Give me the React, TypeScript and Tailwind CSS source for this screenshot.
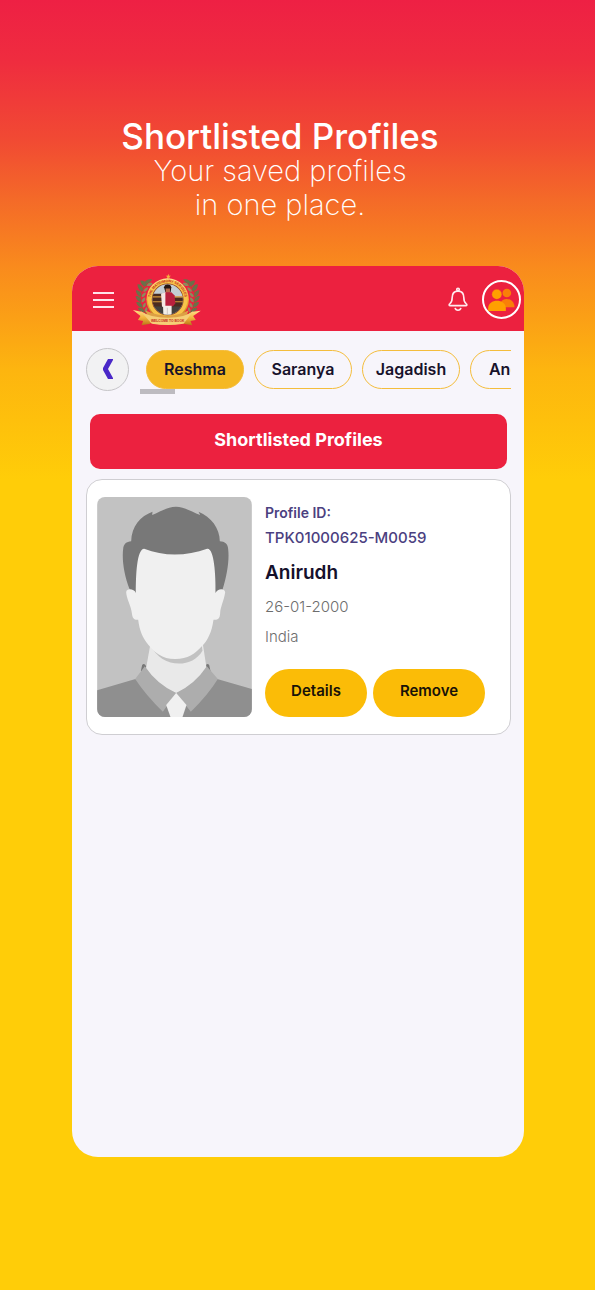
import React, { useState } from "react";

interface Profile {
  id: string;
  name: string;
  dob: string;
  country: string;
}

const tabs = ["Reshma", "Saranya", "Jagadish", "Andrew"];

const shortlisted: Profile[] = [
  {
    id: "TPK01000625-M0059",
    name: "Anirudh",
    dob: "26-01-2000",
    country: "India",
  },
];

// One side of the wreath, mirrored for the other side
const Laurel: React.FC = () => (
  <g>
    <path d="M236 58c-36 22-44 66-14 100" fill="none" stroke="#8a6a2c" strokeWidth="3" />
    <g fill="#6b7048">
      <path d="M240 54c-14-2-22 4-24 12 12 2 20-2 24-12z" />
      <path d="M224 70c-4-10-12-14-20-12 2 12 8 18 18 18z" />
      <path d="M214 84c-4-10-10-16-18-15 0 12 6 20 15 21z" />
      <path d="M208 100c-4-10-10-14-17-13 1 11 7 19 16 19z" />
      <path d="M207 116c-4-9-10-13-17-11 2 10 8 17 17 17z" />
      <path d="M210 132c-5-8-12-11-18-8 3 10 10 15 19 14z" />
      <path d="M216 148c-6-8-13-10-19-7 4 9 12 14 20 12z" />
    </g>
    <g fill="#8d8b5c">
      <path d="M224 74c10 2 16-2 17-9-9-2-15 1-17 9z" />
      <path d="M214 92c9 0 14-6 14-14-9 1-14 6-14 14z" />
      <path d="M209 108c8-1 13-7 12-15-8 2-13 7-12 15z" />
      <path d="M209 124c8-2 12-8 10-16-8 3-12 8-10 16z" />
      <path d="M213 140c7-3 10-9 7-16-7 4-10 9-7 16z" />
      <path d="M220 154c6-4 8-10 4-16-6 4-8 10-4 16z" />
    </g>
  </g>
);

const Logo: React.FC = () => (
  <svg viewBox="180 35 210 160" className="h-[53px] w-[70px]" aria-label="Matrimony Services">
    <defs>
      <linearGradient id="gold" x1="0" y1="0" x2="0" y2="1">
        <stop offset="0" stopColor="#ffe08a" />
        <stop offset="0.5" stopColor="#f2b43c" />
        <stop offset="1" stopColor="#b87318" />
      </linearGradient>
      <clipPath id="scene">
        <circle cx="287" cy="115" r="46" />
      </clipPath>
      <path id="topArc" d="M238 132a52 52 0 1 1 98 0" />
    </defs>
    <path d="M289 37l2 6h6l-5 4 2 6-5-4-5 4 2-6-5-4h6z" fill="#f4b63d" />
    <Laurel />
    <g transform="matrix(-1 0 0 1 574 0)">
      <Laurel />
    </g>
    <circle cx="287" cy="115" r="64" fill="url(#gold)" />
    <circle cx="287" cy="115" r="60" fill="#f7c44b" />
    <circle cx="287" cy="115" r="48" fill="#8f3b18" />
    <g clipPath="url(#scene)">
      <rect x="240" y="68" width="94" height="94" fill="#c3ced3" />
      <path d="M240 98h30l8 10h56v30h-94z" fill="#4b2b20" />
      <path d="M240 105h94v4h-94zM240 120h94v3h-94z" fill="#d49639" />
      <rect x="240" y="136" width="94" height="30" fill="#44403c" />
      <path d="M276 78c2-12 20-12 22 0l-2 14h-16z" fill="#261713" />
      <path d="M281 82h13v16h-13z" fill="#b76c49" />
      <path d="M268 100l14-7h16l10 10 2 24-7 8h-30z" fill="#b9203c" />
      <path d="M267 98l13-4v43h-10z" fill="#f5e8e3" />
      <path d="M273 134h26v31h-25z" fill="#f3eee8" />
      <path d="M286 140v24" stroke="#bcb1ab" strokeWidth="2" />
    </g>
    <text fontFamily="Liberation Sans" fontSize="11" fontWeight="700" fill="#c42a1c">
      <textPath href="#topArc" startOffset="50%" textAnchor="middle">
        THE MATRIMONY SERVICES
      </textPath>
    </text>
    <path d="M182 147l25 5 35 18-8 18-26 5 5-13-16-3 8-12z" fill="url(#gold)" />
    <path d="M387 149l-25 3-35 18 8 18 26 5-5-13 16-3-8-12z" fill="url(#gold)" />
    <path d="M220 148q67 30 130 0l-15 37q-48 12-100 0z" fill="#dca045" />
    <path d="M205 150q28 20 82 20t78-20l-30 38q-48 8-96 0z" fill="#f5cf76" />
    <text x="287" y="183" textAnchor="middle" fontFamily="Liberation Sans" fontSize="10" fontWeight="700" fill="#c42a1c">
      WELCOME TO BOOK
    </text>
  </svg>
);

const BellIcon: React.FC = () => (
  <svg viewBox="84 82 62 76" className="h-[25px] w-5" fill="none" stroke="#ffe9ee" strokeWidth="5">
    <circle cx="115" cy="89" r="4" />
    <path
      d="M115 94c-13 0-18 9-18 20 0 12-2 15-7 19-4 3-3 6 1 6h48c4 0 5-3 1-6-5-4-7-7-7-19 0-11-5-20-18-20z"
      strokeLinejoin="round"
    />
    <path d="M106 146c2 10 16 10 18 0" />
  </svg>
);

const PeopleIcon: React.FC = () => (
  <svg viewBox="206 82 80 72" className="h-6 w-[27px]">
    <circle cx="262" cy="97" r="13" fill="#f97f08" />
    <path d="M244 140v-14c5-18 41-15 41 14z" fill="#f97f08" />
    <circle cx="232" cy="101" r="15" fill="#ffa000" stroke="#ec213f" strokeWidth="1" />
    <path d="M206 151v-8c0-30 53-30 53 0v8z" fill="#ffa000" />
  </svg>
);

const Avatar: React.FC = () => (
  <svg viewBox="52 52 464 660" className="h-[220px] w-[155px] shrink-0 rounded-lg" aria-label="Profile photo">
    <rect x="52" y="52" width="464" height="660" fill="#c2c2c2" />
    <path d="M52 632l115-34 80 60h85l80-60 104 30v84H52z" fill="#8f8f8f" />
    <path d="M187 556q6-8 12 4v14h-16zM388 556q-6-8-12 4v14h16z" fill="#777" />
    <path d="M214 480l-16 90q34 50 91 70 60-20 92-70l-14-90z" fill="#e9e9e9" />
    <path d="M212 495c30 70 124 74 156 18l-5-38-148-2z" fill="#c2c2c2" />
    <path d="M195 560q36 54 94 80l-40 56q-50-48-83-98zM381 560q-36 54-92 80l44 56q50-48 81-98z" fill="#adadad" />
    <path d="M289 640l31 36-12 36h-36l-13-36z" fill="#f0f0f0" />
    <path
      d="M150 330c-18-44-24-92-20-122 1-15 10-22 24-23 1-46 28-76 64-89l-1 10c20-7 45-25 71-25 27 0 51 18 73 25l-5-10c38 15 64 50 64 89 15 1 24 7 25 23 4 32-3 78-17 122l-22 12H168z"
      fill="#787878"
    />
    <path
      d="M168 340c0-55 3-132 25-133 60 24 128 22 189 0 21-3 26 78 25 133 5-14 28-16 29-2-4 27-14 43-15 62-1 19-8 21-20 20-5 36-17 62-35 80-22 23-41 38-80 38-40 0-61-19-80-42-18-22-27-44-31-76-12 1-17-3-19-20-2-20-16-42-17-62 1-14 25-10 29 2z"
      fill="#f0f0f0"
    />
  </svg>
);

const ProfileCard: React.FC<{ profile: Profile; onRemove: (id: string) => void }> = ({
  profile,
  onRemove,
}) => (
  <article className="mt-2.5 flex gap-[13px] rounded-2xl border border-[#cfced2] bg-white px-2.5 py-[17px]">
    <Avatar />
    <div className="flex min-w-0 flex-1 flex-col">
      <p className="mt-1 text-sm leading-6 font-semibold text-[#4b4080]">Profile ID:</p>
      <p className="text-[15px] leading-[26px] font-medium text-[#4b4080]">{profile.id}</p>
      <h3 className="mt-2 text-[19px] leading-7 font-semibold text-[#15102c]">{profile.name}</h3>
      <p className="mt-2 text-[15px] leading-6 font-light text-[#6d6d6d]">{profile.dob}</p>
      <p className="mt-1.5 text-[15px] leading-6 font-light text-[#6d6d6d]">{profile.country}</p>
      <div className="mt-auto flex gap-1.5 text-[15px] font-semibold text-[#181208]">
        <button className="h-12 w-[102px] rounded-full bg-[#fbbc07] pb-1">Details</button>
        <button
          className="h-12 w-28 rounded-full bg-[#fbbc07] pb-1"
          onClick={() => onRemove(profile.id)}
        >
          Remove
        </button>
      </div>
    </div>
  </article>
);

const App: React.FC = () => {
  const [active, setActive] = useState("Reshma");
  const [profiles, setProfiles] = useState<Profile[]>(shortlisted);

  const handleRemove = (id: string) => {
    setProfiles(profiles.filter((profile) => profile.id !== id));
  };

  return (
    <div className="flex min-h-screen flex-col bg-[#ffcd08] bg-linear-[180deg,#ee2044_0px,#ef2c3f_60px,#f14a33_140px,#f46a28_200px,#f98a1d_265px,#fdb50f_370px,#ffcd08_480px] pr-[71px] pb-[133px] pl-[72px] font-[Inter,sans-serif]">
      <div className="pt-[118px] pr-9 text-center text-white">
        <h1 className="text-[35px] leading-9 font-medium">Shortlisted Profiles</h1>
        <p className="text-[29px] leading-[34px] font-extralight">
          Your saved profiles
          <br />
          in one place.
        </p>
      </div>

      <div className="mt-11 flex flex-1 flex-col overflow-hidden rounded-[26px] bg-[#f7f5fb]">
        <header className="flex h-[65px] items-center bg-[#ec213f] pt-0.5 pr-[3px] pl-[21px] text-white">
          <button className="flex w-[21px] flex-col gap-[5px]" aria-label="Menu">
            <span className="h-0.5 w-full bg-[#ffe4ea]" />
            <span className="h-0.5 w-full bg-[#ffe4ea]" />
            <span className="h-0.5 w-full bg-[#ffe4ea]" />
          </button>
          <a href="#" className="ml-[18px]">
            <Logo />
          </a>
          <button className="ml-auto" aria-label="Notifications">
            <BellIcon />
          </button>
          <button
            className="ml-3.5 flex size-[39px] items-center justify-center rounded-full border-2 border-white"
            aria-label="Profiles"
          >
            <PeopleIcon />
          </button>
        </header>

        <main className="px-3.5 pt-[17px] pr-[13px]">
          <div className="flex gap-[11px]">
            <button
              className="flex size-[43px] shrink-0 items-center justify-center rounded-full border border-[#c6c5c8] bg-[#f2f2f3] pb-0.5"
              aria-label="Previous"
            >
              <svg viewBox="0 0 10 20" className="h-5 w-2.5">
                <path d="M5 0h5v1L5 10l5 9v1H5L0 11V9z" fill="#4a28c8" />
              </svg>
            </button>
            <div className="min-w-0 flex-1 overflow-hidden pt-0.5">
              <nav className="flex gap-2.5 pl-1.5">
                {tabs.map((tab) => (
                  <button
                    key={tab}
                    onClick={() => setActive(tab)}
                    className={`h-[39px] w-[98px] shrink-0 rounded-full border border-[#f4bd3c] pb-0.5 text-base font-semibold text-[#17122b] ${
                      active === tab ? "bg-[#f5b823]" : ""
                    }`}
                  >
                    {tab}
                  </button>
                ))}
              </nav>
              <div className="h-[5px] w-[35px] bg-[#bdbbc0]" />
            </div>
          </div>

          <h2 className="mx-1 mt-5 rounded-[10px] bg-[#ec213f] pt-3.5 pb-[17px] text-center text-lg leading-6 font-bold text-white">
            Shortlisted Profiles
          </h2>

          {profiles.map((profile) => (
            <ProfileCard key={profile.id} profile={profile} onRemove={handleRemove} />
          ))}
        </main>
      </div>
    </div>
  );
};

export default App;
